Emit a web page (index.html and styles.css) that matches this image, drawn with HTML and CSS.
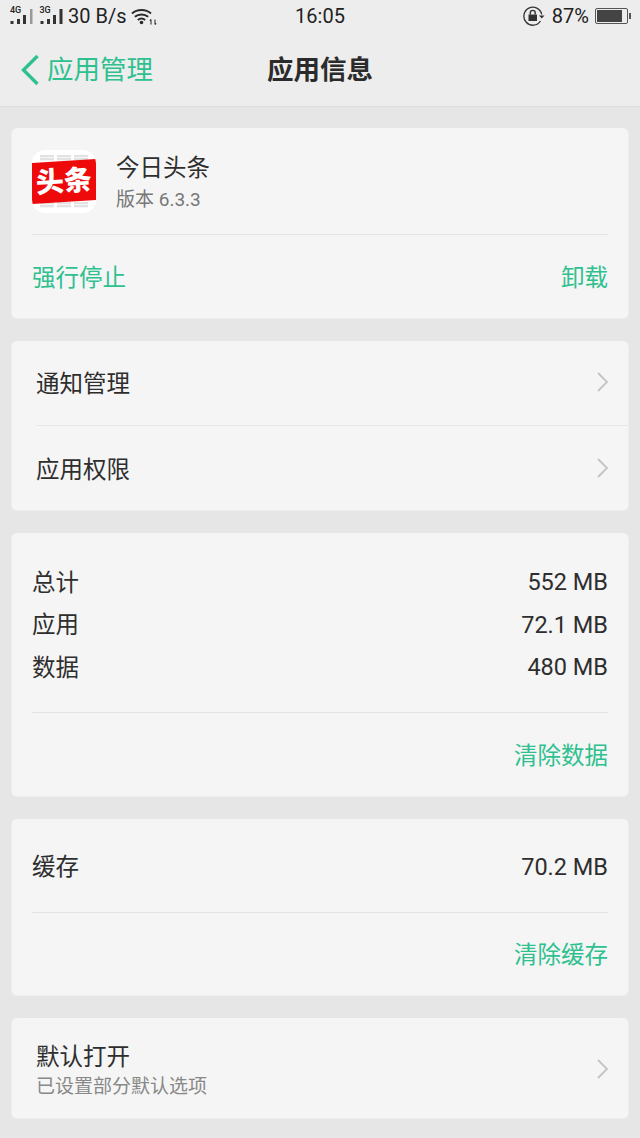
FILE: index.html
```html
<!DOCTYPE html>
<html lang="zh-CN">
<head>
    <meta charset="UTF-8">
    <title>应用信息</title>
    <link rel="stylesheet" href="styles.css">
</head>
<body>
    <header class="top">
        <div class="status">
            <div class="status-left">
                <span class="signal"><i class="net">4G</i>
                    <svg width="24" height="17" viewBox="0 0 24 17"><path fill="#333" d="M1.500 13h3v3h-3zM8 11h3v5H8zM14 7h3v9h-3z"/><path fill="#999" d="M21 1h2.500v15H21z"/></svg>
                </span>
                <span class="signal"><i class="net">3G</i>
                    <svg width="24" height="17" viewBox="0 0 24 17"><path fill="#333" d="M1.500 13h3v3h-3zM8 11h3v5H8zM14 7h3v9h-3zM20.500 1h3v15h-3z"/></svg>
                </span>
                <span class="speed">30 B/s</span>
                <svg class="wifi" width="27" height="19" viewBox="0 0 27 19" fill="none" stroke="#2a2a2a" stroke-width="2"><path d="M2 6.500C7 1.800 16 1.800 21 6.500M4.800 9.800c3.700-3.100 9.700-3.100 13.400 0M7.800 13c2.200-1.700 5.200-1.700 7.400 0"/><circle cx="11.500" cy="15.500" r="1.800" fill="#2a2a2a" stroke="none"/><path stroke="#333" stroke-width="1.100" d="M21 12.500v5M19.800 13.700 21 12.500M25 17.500v-5M25 17.500l1.200-1.200"/></svg>
            </div>
            <span class="clock">16:05</span>
            <div class="status-right">
                <svg width="22" height="20" viewBox="0 0 22 20" fill="none"><path stroke="#333" stroke-width="1.300" d="M17.500 15A9 9 0 1 1 18.700 8.500"/><path fill="#333" d="M16 9.500h5.500l-2.750 3zM5.500 8.500h8.500V15H5.500z"/><path stroke="#333" stroke-width="1.400" d="M7.300 8.500V6.800a2.450 2.450 0 0 1 4.900 0v1.700"/></svg>
                <span class="percent">87%</span>
                <span class="battery"><span class="battery-fill"></span></span>
            </div>
        </div>
        <div class="nav">
            <div class="back">
                <svg width="20" height="32" viewBox="0 0 20 32" fill="none" stroke="#2fc08f" stroke-width="3.400"><path d="M17.500 2 3.500 16 17.500 30"/></svg>
                <span>应用管理</span>
            </div>
            <h1>应用信息</h1>
        </div>
    </header>

    <main class="list">
        <section class="card card-app">
            <div class="app-head">
                <div class="app-icon">
                    <div class="icon-strip"><i></i><i></i><i></i></div>
                    <div class="icon-strip"><i></i><i></i><i></i></div>
                    <div class="icon-band">头条</div>
                </div>
                <div class="app-text">
                    <div class="app-name">今日头条</div>
                    <div class="app-version">版本 6.3.3</div>
                </div>
            </div>
            <div class="actions">
                <span class="green">强行停止</span>
                <span class="green">卸载</span>
            </div>
        </section>

        <section class="card card-links">
            <div class="link-row">
                <span>通知管理</span>
                <svg class="chevron" width="13" height="20" viewBox="0 0 13 20"><path d="M2 1l9 9-9 9"/></svg>
            </div>
            <div class="link-row link-row-line">
                <span>应用权限</span>
                <svg class="chevron" width="13" height="20" viewBox="0 0 13 20"><path d="M2 1l9 9-9 9"/></svg>
            </div>
        </section>

        <section class="card card-storage">
            <div class="stats">
                <div class="stat"><span>总计</span><span class="num">552 MB</span></div>
                <div class="stat"><span>应用</span><span class="num">72.1 MB</span></div>
                <div class="stat"><span>数据</span><span class="num">480 MB</span></div>
            </div>
            <div class="clear-row"><span class="green">清除数据</span></div>
        </section>

        <section class="card card-cache">
            <div class="stats stats-one">
                <div class="stat"><span>缓存</span><span class="num">70.2 MB</span></div>
            </div>
            <div class="clear-row clear-row-cache"><span class="green">清除缓存</span></div>
        </section>

        <section class="card card-default">
            <div class="default-text">
                <div class="default-title">默认打开</div>
                <div class="default-sub">已设置部分默认选项</div>
            </div>
            <svg class="chevron chevron-low" width="13" height="20" viewBox="0 0 13 20"><path d="M2 1l9 9-9 9"/></svg>
        </section>
    </main>
</body>
</html>
```

FILE: styles.css
```css
* {
    box-sizing: border-box;
}

body {
    margin: 0;
    width: 640px;
    height: 1138px;
    overflow: hidden;
    background-color: #e6e6e6;
    color: #2e2e2e;
    font-family: "Roboto", "Noto Sans CJK SC", sans-serif;
    font-size: 23.500px;
}

.top {
    height: 107px;
    background-color: #ededed;
    border-bottom: 1px solid #dcdcdc;
}

.status {
    position: relative;
    display: flex;
    justify-content: space-between;
    align-items: center;
    height: 32px;
    padding: 0 9px;
    font-size: 20px;
    color: #222;
}

.status-left, .status-right {
    display: flex;
    align-items: center;
}

.signal {
    position: relative;
    display: block;
    width: 29.500px;
    height: 17px;
}

.signal svg {
    display: block;
}

.net {
    position: absolute;
    left: 1px;
    top: -2px;
    font-style: normal;
    font-size: 9px;
    line-height: 9px;
    font-weight: 500;
}

.speed {
    margin-right: 4px;
}

.clock {
    position: absolute;
    left: 0;
    right: 0;
    text-align: center;
}

.percent {
    margin: 0 6px 0 7px;
}

.battery {
    position: relative;
    display: block;
    width: 33px;
    height: 16px;
    margin-right: 3px;
    border: 1px solid #555;
    border-radius: 2px;
    padding: 1px;
}

.battery::after {
    content: "";
    position: absolute;
    right: -4px;
    top: 4px;
    width: 2px;
    height: 6px;
    background-color: #555;
}

.battery-fill {
    display: block;
    width: 25px;
    height: 100%;
    background-color: #444;
}

.nav {
    position: relative;
    display: flex;
    align-items: center;
    height: 74px;
    padding: 0 0 3px 20px;
    font-size: 26.500px;
}

.back {
    display: flex;
    align-items: center;
    gap: 7px;
    color: #2fc08f;
}

.back svg {
    margin-top: 5px;
}

.nav h1 {
    position: absolute;
    left: 0;
    right: 0;
    margin: 0;
    text-align: center;
    font-size: 26.500px;
    font-weight: 700;
    color: #2b2b2b;
}

.list {
    display: flex;
    flex-direction: column;
    gap: 22px;
    padding: 21px 11px 0;
}

.card {
    background-color: #f5f5f5;
    border: 1px solid #efefef;
    border-top: 0;
    border-radius: 6px;
}

.green {
    color: #2fc08f;
}

.card-app {
    height: 191px;
    padding: 0 20px;
}

.app-head {
    display: flex;
    align-items: center;
    gap: 20px;
    height: 107px;
    border-bottom: 1px solid #e2e2e2;
}

.app-icon {
    position: relative;
    display: flex;
    flex-direction: column;
    justify-content: space-between;
    width: 64px;
    height: 63px;
    margin-top: 1px;
    padding: 5px 8px;
    background-color: #fff;
    border-radius: 13px;
    overflow: hidden;
}

.icon-strip {
    display: flex;
    gap: 3px;
    height: 6px;
}

.icon-strip i {
    flex: 1;
    background: repeating-linear-gradient(#e2e2e2 0 2px, #f6f6f6 2px 3px);
}

.icon-band {
    position: absolute;
    left: -1px;
    top: 11px;
    width: 66px;
    height: 41px;
    background-color: #ee0a0a;
    color: #fff;
    font-size: 28px;
    font-weight: 900;
    line-height: 41px;
    text-align: center;
    transform: rotate(-3.500deg);
}

.app-text {
    padding-top: 5px;
}

.app-name {
    line-height: 32px;
}

.app-version {
    color: #777;
    font-size: 19px;
    line-height: 32px;
}

.actions {
    display: flex;
    justify-content: space-between;
    align-items: center;
    height: 82px;
    padding-bottom: 1px;
}

.card-links {
    height: 170px;
    padding-left: 24px;
}

.link-row {
    display: flex;
    justify-content: space-between;
    align-items: center;
    height: 84px;
    padding: 0 19px 3px 0;
}

.link-row-line {
    padding-bottom: 0;
    border-top: 1px solid #e6e6e6;
}

.chevron {
    fill: none;
    stroke: #c4c4c4;
    stroke-width: 1.800;
}

.chevron-low {
    margin-top: 1px;
}

.card-storage {
    height: 264px;
    padding: 0 20px;
}

.stats {
    display: flex;
    flex-direction: column;
    justify-content: center;
    height: 180px;
    padding-top: 1px;
    border-bottom: 1px solid #e2e2e2;
}

.stats-one {
    height: 94px;
    padding: 0 0 1px;
}

.stat {
    display: flex;
    justify-content: space-between;
    align-items: center;
    height: 42.500px;
}

.num {
    padding-top: 3px;
}

.clear-row {
    display: flex;
    justify-content: flex-end;
    align-items: center;
    height: 83px;
    padding-bottom: 2px;
}

.card-cache {
    height: 177px;
    padding: 0 20px;
}

.clear-row-cache {
    height: 81px;
}

.card-default {
    display: flex;
    justify-content: space-between;
    align-items: center;
    height: 101px;
    padding: 0 19px 0 24px;
}

.default-text {
    padding-top: 3px;
}

.default-title {
    line-height: 34px;
}

.default-sub {
    color: #888;
    font-size: 19px;
    line-height: 26px;
}
```
